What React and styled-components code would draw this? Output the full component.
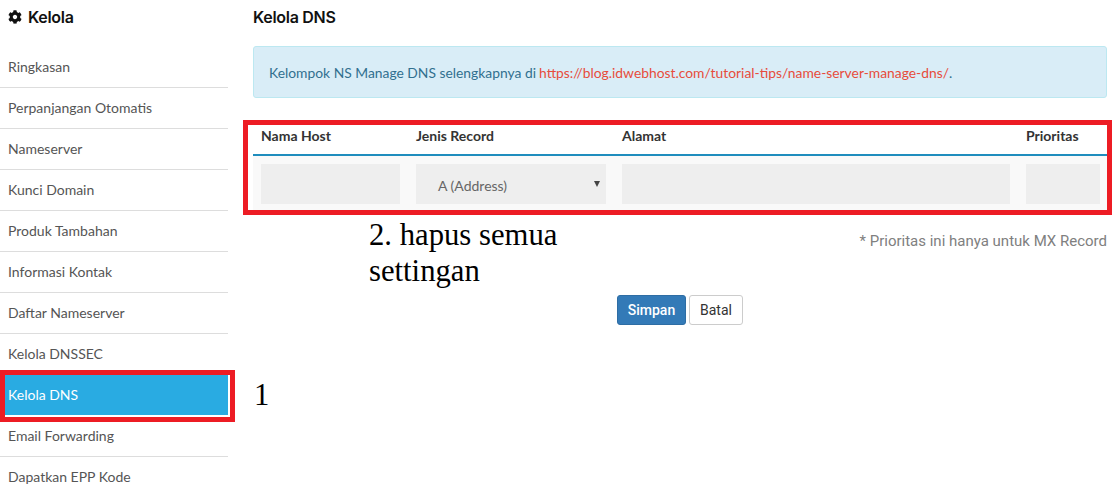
import React from "react";
import styled, { createGlobalStyle } from "styled-components";
import { FaCog } from "react-icons/fa";

const GlobalStyle = createGlobalStyle`
  html, body {
    margin: 0;
    padding: 0;
    background: #fff;
    overflow: hidden;
  }
  * {
    box-sizing: border-box;
  }
`;

const Page = styled.div`
  position: relative;
  display: flex;
  width: 1115px;
  height: 495px;
  overflow: hidden;
  font-family: Lato, "Liberation Sans", sans-serif;
  font-size: 14px;
  color: #555;
`;

const Sidebar = styled.aside`
  width: 228px;
  flex: none;
`;

const SideTitle = styled.h3`
  display: flex;
  align-items: center;
  gap: 6px;
  height: 47px;
  margin: 0;
  padding: 0 0 13px 8px;
  font-family: Inter, sans-serif;
  font-size: 16px;
  font-weight: 600;
  letter-spacing: -0.3px;
  color: #111;
`;

const SideItem = styled.div`
  position: relative;
  display: flex;
  align-items: center;
  height: 41px;
  padding: 0 0 2px 8px;
  border-bottom: 1px solid ${(p) => (p.$active ? "#fff" : "#ddd")};
  background: ${(p) => (p.$active ? "#29abe2" : "transparent")};
  color: ${(p) => (p.$active ? "#fff" : "#555")};
`;

const Highlight = styled.div`
  position: absolute;
  border: 5px solid #ed1c24;
  pointer-events: none;
`;

const SideHighlight = styled(Highlight)`
  left: 0;
  top: -5px;
  width: 235px;
  height: 52px;
`;

const Main = styled.main`
  position: relative;
  flex: 1;
  padding-left: 25px;
  padding-right: 8px;
`;

const PageTitle = styled.h3`
  display: flex;
  align-items: center;
  height: 46px;
  margin: 0;
  padding-bottom: 12px;
  font-family: Inter, sans-serif;
  font-size: 16px;
  font-weight: 600;
  letter-spacing: -0.3px;
  color: #111;
`;

const Alert = styled.div`
  display: flex;
  align-items: center;
  height: 52px;
  padding-left: 15px;
  background: #d9edf7;
  border: 1px solid #bce8f1;
  border-radius: 3px;
  font-size: 13.85px;
  color: #31708f;
`;

const AlertLink = styled.a`
  color: #e74c3c;
  margin-left: 3px;
  text-decoration: none;
`;

const RecordTable = styled.div`
  position: relative;
  margin-top: 23px;
`;

const HeadRow = styled.div`
  display: grid;
  grid-template-columns: 155px 206px 404px 89px;
  height: 35px;
  border-bottom: 2px solid #1f8dbd;
  font-weight: 700;
  color: #333;
`;

const BodyRow = styled.div`
  display: grid;
  grid-template-columns: 155px 206px 404px 89px;
  height: 56px;
  align-items: start;
  padding-top: 8px;
  background: #f9f9f9;
`;

const HeadCell = styled.div`
  padding: 6px 8px 0;
`;

const BodyCell = styled.div`
  padding: 0 ${(p) => (p.$last ? "7px" : "8px")} 0 8px;
`;

const Field = styled.div`
  height: 40px;
  background: #eee;
`;

const SelectField = styled(Field)`
  display: flex;
  align-items: center;
  justify-content: space-between;
  padding: 2px 6px 0 22px;
  color: #666;
`;

const Caret = styled.span`
  width: 0;
  height: 0;
  margin-bottom: 3px;
  border-left: 3px solid transparent;
  border-right: 3px solid transparent;
  border-top: 6px solid #444;
`;

const TableHighlight = styled(Highlight)`
  left: -10px;
  top: -1px;
  width: 869px;
  height: 95px;
`;

const Note = styled.div`
  margin-top: 20px;
  text-align: right;
  font-family: Roboto, sans-serif;
  font-size: 15px;
  color: #808080;
`;

const Actions = styled.div`
  display: flex;
  justify-content: center;
  gap: 3px;
  margin-top: 45px;
`;

const Button = styled.button`
  height: 30px;
  padding: 0;
  width: ${(p) => (p.$primary ? "69px" : "54px")};
  border: 1px solid ${(p) => (p.$primary ? "#2e6da4" : "#ccc")};
  border-radius: 3px;
  background: ${(p) => (p.$primary ? "#337ab7" : "#fff")};
  color: ${(p) => (p.$primary ? "#fff" : "#333")};
  font-family: Roboto, sans-serif;
  font-size: 14px;
  font-weight: ${(p) => (p.$primary ? 500 : 400)};
`;

const Annotation = styled.div`
  position: absolute;
  font-family: "Liberation Serif", serif;
  font-size: 30.7px;
  line-height: 36px;
  color: #000;
`;

const StepTwo = styled(Annotation)`
  left: 141px;
  top: 217px;
  width: 200px;
`;

const StepOne = styled(Annotation)`
  left: 26px;
  top: 377px;
`;

const menu = [
  "Ringkasan",
  "Perpanjangan Otomatis",
  "Nameserver",
  "Kunci Domain",
  "Produk Tambahan",
  "Informasi Kontak",
  "Daftar Nameserver",
  "Kelola DNSSEC",
  "Kelola DNS",
  "Email Forwarding",
  "Dapatkan EPP Kode",
];

const App = () => {
  return (
    <Page>
      <GlobalStyle />
      <Sidebar>
        <SideTitle>
          <FaCog size={14} color="#111" />
          Kelola
        </SideTitle>
        {menu.map((label) => (
          <SideItem key={label} $active={label === "Kelola DNS"}>
            {label}
            {label === "Kelola DNS" && <SideHighlight />}
          </SideItem>
        ))}
      </Sidebar>
      <Main>
        <PageTitle>Kelola DNS</PageTitle>
        <Alert>
          Kelompok NS Manage DNS selengkapnya di
          <AlertLink href="#">https://blog.idwebhost.com/tutorial-tips/name-server-manage-dns/</AlertLink>.
        </Alert>
        <RecordTable>
          <HeadRow>
            <HeadCell>Nama Host</HeadCell>
            <HeadCell>Jenis Record</HeadCell>
            <HeadCell>Alamat</HeadCell>
            <HeadCell>Prioritas</HeadCell>
          </HeadRow>
          <BodyRow>
            <BodyCell>
              <Field />
            </BodyCell>
            <BodyCell>
              <SelectField>
                A (Address)
                <Caret />
              </SelectField>
            </BodyCell>
            <BodyCell>
              <Field />
            </BodyCell>
            <BodyCell $last>
              <Field />
            </BodyCell>
          </BodyRow>
          <TableHighlight />
        </RecordTable>
        <Note>* Prioritas ini hanya untuk MX Record</Note>
        <Actions>
          <Button $primary>Simpan</Button>
          <Button>Batal</Button>
        </Actions>
        <StepTwo>2. hapus semua settingan</StepTwo>
        <StepOne>1</StepOne>
      </Main>
    </Page>
  );
};

export default App;
